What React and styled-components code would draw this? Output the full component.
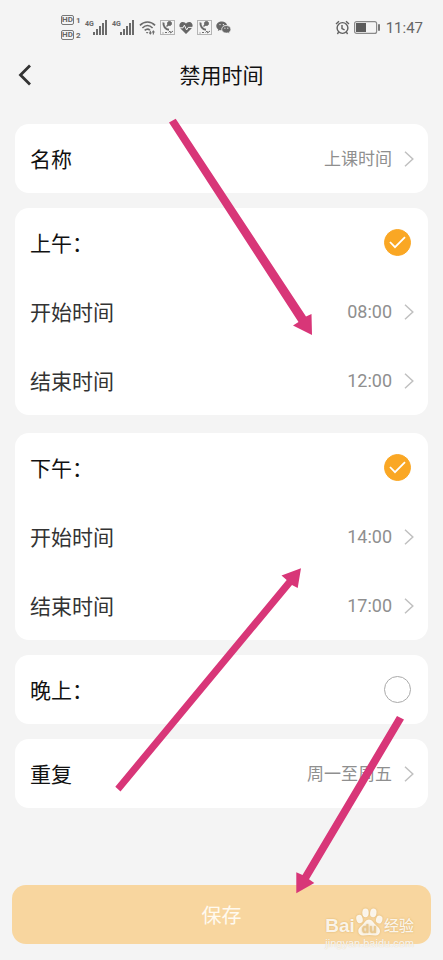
import React, { useState } from 'react';
import styled, { createGlobalStyle } from 'styled-components';

const GlobalStyle = createGlobalStyle`
  * {
    box-sizing: border-box;
  }

  body {
    margin: 0;
    background: #f4f4f4;
    font-family: Roboto, "Noto Sans CJK SC", sans-serif;
  }

  button {
    font-family: inherit;
  }
`;

const Signal = () => (
  <svg width="15" height="15" viewBox="0 0 15 15" fill="#6b6b6b">
    <rect x="0" y="12" width="2" height="3" />
    <rect x="3" y="9" width="2" height="6" />
    <rect x="6" y="6" width="2" height="9" />
    <rect x="9" y="3" width="2" height="12" />
    <rect x="12" y="0" width="2" height="15" />
  </svg>
);

const Wifi = () => (
  <svg width="17" height="15" viewBox="0 0 18 15" fill="none" stroke="#6b6b6b" strokeWidth="1.7">
    <path d="M1 5.2C5.500 .4 12.500 .4 17 5.200" />
    <path d="M3.600 8C7 4.700 11 4.700 14.400 8" />
    <path d="M6 10.600C8 8.800 10 8.800 11.600 10.400" />
    <path d="M7.300 12.200h2.600L8.600 14z" fill="#6b6b6b" stroke="none" />
    <path d="M10.800 13L12 14.800 13.200 13zM14 12.500L15.200 10.700 16.400 12.500z" fill="#6b6b6b" strokeWidth=".6" />
    <path d="M12 11v3M15.200 12v3" strokeWidth="1.200" />
  </svg>
);

const CallBox = () => (
  <svg width="15" height="15" viewBox="0 0 15 15" fill="none" stroke="#6b6b6b">
    <rect x=".5" y=".5" width="14" height="14" stroke="#b4b4b4" />
    <path d="M3.500 2.500C3 6 5.500 9.500 9 9.800" strokeWidth="2" />
    <circle cx="9.500" cy="3.500" r="2" fill="#6b6b6b" />
    <path d="M6.500 6.500L8.500 4.500" strokeWidth="1.400" />
    <path d="M2.500 13h1M5 12.500h2M8.500 12.500L10 11l.5 2 2.500-2" strokeWidth="1" />
  </svg>
);

const Heart = () => (
  <svg width="14" height="14" viewBox="0 0 14 14">
    <path d="M7 13L1.500 7.600C-.6 5 .4 1.200 3.600 1 5.200 .9 6.400 1.700 7 2.800 7.600 1.700 8.800 .9 10.400 1c3.200.2 4.200 4 2.100 6.600z" fill="#666" />
    <path d="M0 6.800h4l1.400-2.600 2.200 4.800 1.600-2.600H14" fill="none" stroke="#f4f4f4" strokeWidth="1" />
  </svg>
);

const Wechat = () => (
  <svg width="15" height="13" viewBox="0 0 15 13" fill="#666">
    <path d="M6 .5C2.700.5.300 2.500.300 5c0 1.400.8 2.600 2 3.400L1.800 10l2-1c.6.200 1.200.3 2 .3C5 6 7.500 4 11 4 10.500 2 8.500.5 6 .5z" />
    <path d="M10.300 4.600c-2.600 0-4.500 1.600-4.500 3.700s1.900 3.700 4.500 3.700c.6 0 1.100-.1 1.600-.2l1.600.8-.4-1.300c1-.7 1.700-1.800 1.700-3 0-2.100-2-3.700-4.500-3.700z" stroke="#f4f4f4" strokeWidth=".6" />
    <g fill="#f4f4f4">
      <circle cx="4" cy="3.600" r=".7" />
      <circle cx="7.400" cy="3.600" r=".7" />
      <circle cx="8.900" cy="7.200" r=".6" />
      <circle cx="11.800" cy="7.200" r=".6" />
    </g>
  </svg>
);

const Alarm = () => (
  <svg width="15" height="15" viewBox="0 0 15 15" fill="none" stroke="#606060" strokeWidth="1.400">
    <circle cx="7.500" cy="8" r="5.400" />
    <path d="M7 5v3.500l2.600 1.400M1 4L4 1.300M14 4L11 1.300M3.600 12.200L2.400 14M11.400 12.200l1.200 1.800" />
  </svg>
);

const Battery = () => (
  <svg width="26" height="13" viewBox="0 0 26 13">
    <rect x=".6" y=".6" width="22" height="11.800" rx="2" fill="none" stroke="#8a8a8a" strokeWidth="1.200" />
    <rect x="2" y="2" width="10" height="9" fill="#5c5c5c" />
    <rect x="24" y="3" width="2" height="7" rx="1" fill="#777" />
  </svg>
);

const Chevron = () => (
  <svg width="10" height="16" viewBox="0 0 10 16" fill="none" stroke="#c0c0c0" strokeWidth="1.500">
    <path d="M1 .8L8.800 8 1 15.200" />
  </svg>
);

const Paw = () => (
  <svg width="27" height="28" viewBox="0 0 27 28" fill="currentColor">
    <ellipse cx="3.500" cy="11" rx="3.200" ry="4.200" transform="rotate(-14 3.500 11)" />
    <ellipse cx="9.500" cy="4.800" rx="3.200" ry="4.400" />
    <ellipse cx="17.300" cy="4.900" rx="3.200" ry="4.400" transform="rotate(8 17.300 4.900)" />
    <ellipse cx="23.200" cy="11.500" rx="3.200" ry="4" transform="rotate(16 23.200 11.500)" />
    <path d="M13 11.500c-3 0-4.300 3-6.300 5S2.300 20 2.300 23.200c0 2.600 1.900 4.300 4.700 4.300 2.200 0 4-.5 6.200-.5s4 .5 6.200.5c2.800 0 4.600-1.700 4.600-4.300 0-3.200-2.600-4.700-4.600-6.700s-3.400-5-6.400-5z" />
    <text x="13.200" y="25" textAnchor="middle" fontFamily="Liberation Sans" fontWeight="700" fontSize="12" fill="#e9c88f">du</text>
  </svg>
);

const PeriodCard = ({ title, start, end, defaultOn }) => {
  const [on, setOn] = useState(defaultOn)
  return (
    <Card>
      <PeriodHead>
        <Label>{title}</Label>
        <Check>
          <input type="checkbox" checked={on} onChange={(e) => setOn(e.target.checked)} />
          {on && (
            <svg width="17" height="13" viewBox="0 0 17 13" fill="none" stroke="#fff" strokeWidth="1.800">
              <path d="M1 6L6 11.200 16 1.200" />
            </svg>
          )}
        </Check>
      </PeriodHead>
      {start && <SettingRow label="开始时间" value={start} sub />}
      {end && <SettingRow label="结束时间" value={end} sub />}
    </Card>
  )
}

const SettingRow = ({ label, value, sub }) => (
  <Row type="button">
    <Label $sub={sub}>{label}</Label>
    <Value $time={sub}>{value}</Value>
    <Chevron />
  </Row>
)

const App = () => {
  return (
    <Page>
      <GlobalStyle />
      <StatusBar>
        <HdGroup>
          <div><b>HD</b><i>1</i></div>
          <div><b>HD</b><i>2</i></div>
        </HdGroup>
        <Network><span>4G</span><Signal /></Network>
        <Network><span>4G</span><Signal /></Network>
        <Notices>
          <Wifi />
          <CallBox />
          <Heart />
          <CallBox />
          <Wechat />
        </Notices>
        <Alarm />
        <Battery />
        <Clock>11:47</Clock>
      </StatusBar>

      <Header>
        <Back type="button" aria-label="返回">
          <svg width="14" height="22" viewBox="0 0 14 22" fill="none" stroke="#333" strokeWidth="2.800">
            <path d="M12 1.500L2.500 11 12 20.500" />
          </svg>
        </Back>
        <h1>禁用时间</h1>
      </Header>

      <Main>
        <Card>
          <SettingRow label="名称" value="上课时间" />
        </Card>
        <PeriodGroup>
          <PeriodCard title="上午：" start="08:00" end="12:00" defaultOn />
          <PeriodCard title="下午：" start="14:00" end="17:00" defaultOn />
        </PeriodGroup>
        <PeriodCard title="晚上：" defaultOn={false} />
        <Card>
          <SettingRow label="重复" value="周一至周五" />
        </Card>
      </Main>

      <Footer>
        <Save type="button">保存</Save>
        <Watermark>
          <Brand>
            <span>Bai</span>
            <Paw />
            <em>经验</em>
          </Brand>
          <small>jingyan.baidu.com</small>
        </Watermark>
      </Footer>

      <Arrows viewBox="0 0 443 960" fill="#d83678">
        <path d="M169 122.500L175.700 118.700 306 316.500 311.500 314 312 335 293 325.500 298.500 322z" />
        <path d="M115.300 786.700L286.700 580 281.500 575.500 301 568.300 297.700 588 292 585 120.500 791.500z" />
        <path d="M397 716L404 719.500 309 879.300 314.300 883 296.300 893.300V872.300L302.500 875z" />
      </Arrows>
    </Page>
  );
}

const Page = styled.div`
  position: relative;
  display: flex;
  flex-direction: column;
  min-height: 100vh;
  background: #f4f4f4;
  color: #111;
`;

/*Status bar*/
const StatusBar = styled.div`
  display: flex;
  align-items: center;
  gap: 4px;
  height: 55px;
  padding: 0 20px 0 61px;
  color: #666;
`;

const HdGroup = styled.div`
  display: flex;
  flex-direction: column;
  gap: 5px;

  div {
    display: flex;
    align-items: flex-end;
    gap: 2px;
  }

  b {
    width: 13px;
    height: 10px;
    border: 1px solid #777;
    border-radius: 2px;
    font-size: 8px;
    line-height: 8px;
    text-align: center;
  }

  i {
    width: 5px;
    font-size: 8px;
    font-style: normal;
    font-weight: 700;
    line-height: 8px;
  }
`;

const Network = styled.div`
  display: flex;
  align-items: flex-start;

  span {
    width: 8px;
    font-size: 7px;
    font-weight: 700;
    line-height: 8px;
  }
`;

const Notices = styled.div`
  display: flex;
  align-items: center;
  flex: 1;
  gap: 4px;
`;

const Clock = styled.span`
  margin-left: 2px;
  font-size: 15px;
  line-height: 20px;
`;

/*Title bar*/
const Header = styled.header`
  display: grid;
  grid-template-columns: 48px 1fr 48px;
  align-items: center;
  height: 40px;

  h1 {
    margin: 0;
    padding-top: 2px;
    font-size: 21px;
    font-weight: 400;
    line-height: 30px;
    text-align: center;
  }
`;

const Back = styled.button`
  display: flex;
  padding: 0 0 0 18px;
  border: 0;
  background: none;
  cursor: pointer;
`;

/*Cards*/
const Main = styled.main`
  display: flex;
  flex-direction: column;
  gap: 15px;
  padding: 29px 15px 0;
`;

const PeriodGroup = styled.div`
  display: flex;
  flex-direction: column;
  gap: 18px;
`;

const Card = styled.section`
  background: #fff;
  border-radius: 14px;
`;

const Row = styled.button`
  display: flex;
  align-items: center;
  width: 100%;
  height: 69px;
  padding: 0 14px 0 15px;
  border: 0;
  background: none;
  text-align: left;
  cursor: pointer;
`;

const Label = styled.span`
  flex: 1;
  padding-top: 2px;
  font-size: 21px;
  line-height: 30px;
  color: ${(p) => (p.$sub ? '#333' : '#111')};
`;

const Value = styled.span`
  margin-right: 12px;
  font-size: ${(p) => (p.$time ? '18px' : '17px')};
  line-height: 24px;
  color: #8f8f8f;
`;

const PeriodHead = styled.label`
  display: flex;
  align-items: center;
  height: 69px;
  padding: 0 17px 0 15px;
  cursor: pointer;
`;

const Check = styled.span`
  display: grid;
  place-items: center;

  input,
  svg {
    grid-area: 1 / 1;
  }

  input {
    appearance: none;
    width: 27px;
    height: 27px;
    margin: 0;
    border: 1px solid #aaa;
    border-radius: 50%;
    background: #fff;
    cursor: pointer;
  }

  input:checked {
    border-color: #faa724;
    background: #faa724;
  }

  svg {
    z-index: 1;
    pointer-events: none;
  }
`;

/*Save button*/
const Footer = styled.footer`
  position: relative;
  margin-top: auto;
  padding: 16px 12px;
`;

const Save = styled.button`
  display: block;
  width: 100%;
  height: 59px;
  border: 0;
  border-radius: 14px;
  background: #f8d69f;
  color: #fffaf0;
  font-size: 20px;
  cursor: pointer;
`;

const Watermark = styled.div`
  position: absolute;
  right: 29px;
  bottom: 10px;
  color: rgba(255, 255, 255, 0.85);
  pointer-events: none;

  small {
    display: block;
    font-family: "Liberation Sans", sans-serif;
    font-size: 11px;
    line-height: 14px;
    text-shadow: 0 0 1px #d9c4a0;
  }
`;

const Brand = styled.div`
  display: flex;
  align-items: flex-end;
  gap: 1px;
  line-height: 20px;
  text-shadow: 0 0 2px #d9b06a;

  span {
    font-family: "Liberation Sans", sans-serif;
    font-size: 19px;
    font-weight: 700;
  }

  svg {
    overflow: visible;
    filter: drop-shadow(0 0 1px #d9b06a);
  }

  em {
    font-size: 15px;
    font-style: normal;
    font-weight: 500;
  }
`;

const Arrows = styled.svg`
  position: absolute;
  top: 0;
  left: 0;
  width: 100%;
  pointer-events: none;
`;

export default App;
